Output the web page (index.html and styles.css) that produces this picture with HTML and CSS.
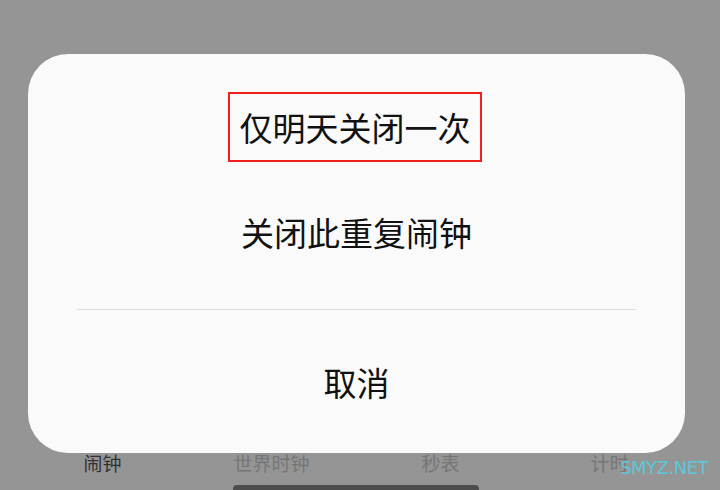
FILE: index.html
```html
<!DOCTYPE html>
<html lang="zh-CN">

<head>
    <meta charset="UTF-8" />
    <meta name="viewport" content="width=device-width, initial-scale=1.0" />
    <title>闹钟</title>
    <link rel="stylesheet" href="styles.css">
</head>

<body>
    <div class="sheet">
        <div class="option">
            <span class="highlight">仅明天关闭一次</span>
        </div>
        <div class="option">关闭此重复闹钟</div>
        <div class="divider"></div>
        <div class="option">取消</div>
    </div>

    <nav class="tabs">
        <span class="tab active">闹钟</span>
        <span class="tab">世界时钟</span>
        <span class="tab">秒表</span>
        <span class="tab">计时</span>
    </nav>
    <div class="home-bar"></div>

    <div class="watermark">SMYZ.NET</div>
</body>

</html>
```

FILE: styles.css
```css
body {
    font-family: "Noto Sans CJK SC", "Noto Sans", sans-serif;
    background: #959595;
    margin: 0;
    padding: 0;
    height: 490px;
    overflow: hidden;
    position: relative;
}

.sheet {
    background: #fafafa;
    margin: 54px 35px 0 28px;
    height: 399px;
    border-radius: 40px;
    padding: 38px 0 0;
    box-sizing: border-box;
    display: flex;
    flex-direction: column;
    align-items: center;
}

.option {
    height: 70px;
    display: flex;
    align-items: center;
    justify-content: center;
    font-size: 33px;
    color: #111;
}

.option + .option {
    margin-top: 35px;
}

.highlight {
    width: 254px;
    height: 70px;
    margin-right: 3px;
    box-sizing: border-box;
    border: 2px solid #f0201c;
    display: flex;
    align-items: center;
    justify-content: center;
}

.divider {
    align-self: stretch;
    height: 1px;
    background: #dcdcdc;
    margin: 42px 49px 37px;
}

.divider + .option {
    margin-top: 0;
}

.tabs {
    display: grid;
    grid-template-columns: repeat(4, 169px);
    margin: 0 0 0 18px;
    height: 20px;
}

.tab {
    text-align: center;
    font-size: 19px;
    line-height: 20px;
    color: #767676;
}

.tab.active {
    color: #333;
}

.home-bar {
    width: 246px;
    height: 8px;
    margin: 12px 0 0 233px;
    background: #4d4d4d;
    border-radius: 4px;
}

.watermark {
    position: absolute;
    right: 12px;
    top: 457px;
    font-family: "DejaVu Sans", sans-serif;
    font-size: 18px;
    letter-spacing: -0.5px;
    color: #5cc8dc;
}
```
